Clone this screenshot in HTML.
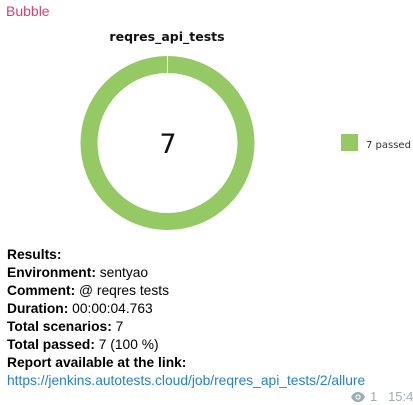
<!DOCTYPE html>
<html><head><meta charset="utf-8"><style>
body{margin:0;width:413px;height:405px;background:#fff;overflow:hidden;position:relative;font-family:"Liberation Sans","DejaVu Sans",sans-serif;}
.t{position:absolute;left:7px;font-size:13.8px;color:#000;line-height:18px;white-space:nowrap}
b{font-weight:bold}
</style></head><body>
<div style="position:absolute;left:6px;top:3px;font-size:14px;color:#d63d7c">Bubble</div>
<div style="position:absolute;left:67px;top:29px;width:200px;text-align:center;font:bold 12.5px 'DejaVu Sans',sans-serif;color:#111">reqres_api_tests</div>
<svg style="position:absolute;left:0;top:0" width="413" height="240">
<circle cx="167.5" cy="143" r="78.5" fill="none" stroke="#95c964" stroke-width="17"/>
<line x1="167.5" y1="55" x2="167.5" y2="73" stroke="#fff" stroke-width="1"/>
<text x="168" y="153" text-anchor="middle" font-family="DejaVu Sans,sans-serif" font-size="27" fill="#111">7</text>
<rect x="341" y="134" width="17" height="17" fill="#95c964"/>
<text x="366" y="148" font-family="DejaVu Sans,sans-serif" font-size="10" fill="#333">7 passed</text>
</svg>
<div class="t" style="top:246px"><b>Results:</b></div>
<div class="t" style="top:264px"><b>Environment:</b> sentyao</div>
<div class="t" style="top:282px"><b>Comment:</b> @ reqres tests</div>
<div class="t" style="top:300px"><b>Duration:</b> 00:00:04.763</div>
<div class="t" style="top:318px"><b>Total scenarios:</b> 7</div>
<div class="t" style="top:336px"><b>Total passed:</b> 7 (100 %)</div>
<div class="t" style="top:354px"><b>Report available at the link:</b></div>
<div class="t" style="top:372px;color:#2481cc">https://jenkins.autotests.cloud/job/reqres_api_tests/2/allure</div>
<svg style="position:absolute;left:350px;top:391px" width="16" height="12" viewBox="0 0 16 12"><path d="M1 6C3 2 5.5 1 8 1s5 1 7 5c-2 4-4.5 5-7 5S3 10 1 6z" fill="#a0acb6"/><circle cx="8" cy="6" r="2.6" fill="#fff"/><circle cx="8" cy="6" r="1.5" fill="#a0acb6"/></svg>
<div style="position:absolute;left:370px;top:389px;font-size:13px;color:#a0acb6;white-space:nowrap">1&nbsp;&nbsp;&nbsp;15:49</div>
</body></html>
